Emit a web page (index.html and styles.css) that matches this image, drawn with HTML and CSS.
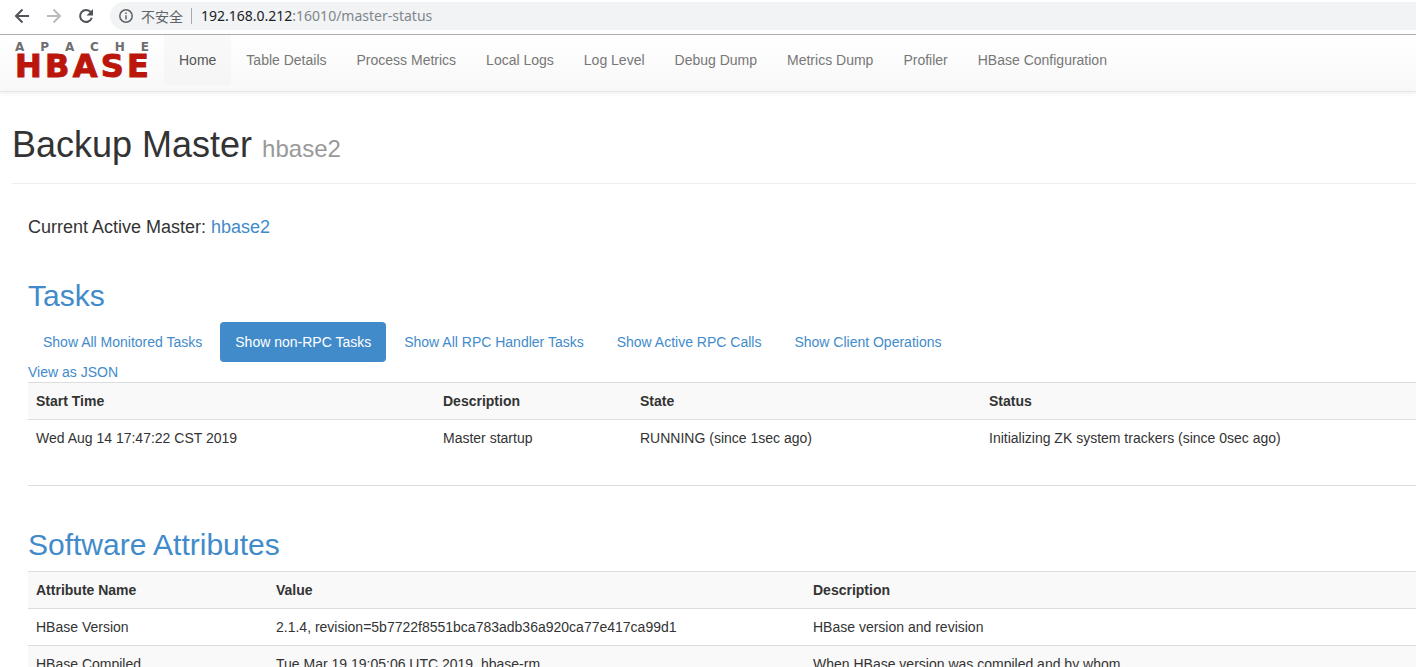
FILE: index.html
```html
<!DOCTYPE html>
<html lang="en">
<head>
<meta charset="utf-8">
<title>Backup Master: hbase2</title>
<link rel="stylesheet" href="styles.css">
</head>
<body>
<div class="toolbar">
  <button class="tool" type="button" aria-label="Back"><svg viewBox="0 0 16 16" width="16" height="16"><path d="M15 8H2.500M8.500 1.500L2 8l6.500 6.500"/></svg></button>
  <button class="tool tool-disabled" type="button" aria-label="Forward" disabled><svg viewBox="0 0 16 16" width="16" height="16"><path d="M1 8h12.500M7.500 1.500L14 8l-6.500 6.500"/></svg></button>
  <button class="tool" type="button" aria-label="Reload"><svg viewBox="0 0 16 16" width="16" height="16"><path d="M12.800 4.200A6 6 0 1 0 13.800 9.800"/><path class="solid" d="M15 1v6.500H8.500z"/></svg></button>
  <div class="address">
    <svg class="info" viewBox="0 0 14 14" width="14" height="14"><circle cx="7" cy="7" r="6.200"/><path d="M7 6.200v4.300M7 3.500v1.500"/></svg>
    <span class="insecure" lang="zh">不安全</span>
    <span class="url"><span class="host">192.168.0.212</span>:16010/master-status</span>
  </div>
</div>
<header class="navbar">
  <a class="brand" href="#" aria-label="Apache HBase">
    <span class="brand-top"><span>A</span><span>P</span><span>A</span><span>C</span><span>H</span><span>E</span></span>
    <span class="brand-main"><span>H</span><span>B</span><span>A</span><span>S</span><span>E</span></span>
  </a>
  <nav class="menu">
    <a class="active" href="#">Home</a>
    <a href="#">Table Details</a>
    <a href="#">Process Metrics</a>
    <a href="#">Local Logs</a>
    <a href="#">Log Level</a>
    <a href="#">Debug Dump</a>
    <a href="#">Metrics Dump</a>
    <a href="#">Profiler</a>
    <a href="#">HBase Configuration</a>
  </nav>
</header>
<main class="page">
  <div class="page-header"><h1>Backup Master <small>hbase2</small></h1></div>
  <div class="content">
    <p class="lead">Current Active Master: <a href="#">hbase2</a></p>
    <section class="tasks">
      <h2><a href="#">Tasks</a></h2>
      <nav class="pills">
        <a href="#">Show All Monitored Tasks</a>
        <a class="active" href="#">Show non-RPC Tasks</a>
        <a href="#">Show All RPC Handler Tasks</a>
        <a href="#">Show Active RPC Calls</a>
        <a href="#">Show Client Operations</a>
      </nav>
      <a class="json" href="#">View as JSON</a>
      <table>
        <colgroup><col class="c-time"><col class="c-desc"><col class="c-state"><col></colgroup>
        <tr><th>Start Time</th><th>Description</th><th>State</th><th>Status</th></tr>
        <tr><td>Wed Aug 14 17:47:22 CST 2019</td><td>Master startup</td><td>RUNNING (since 1sec ago)</td><td>Initializing ZK system trackers (since 0sec ago)</td></tr>
      </table>
    </section>
    <section>
      <h2><a href="#">Software Attributes</a></h2>
      <table>
        <colgroup><col class="c-name"><col class="c-value"><col></colgroup>
        <tr><th>Attribute Name</th><th>Value</th><th>Description</th></tr>
        <tr><td>HBase Version</td><td>2.1.4, revision=5b7722f8551bca783adb36a920ca77e417ca99d1</td><td>HBase version and revision</td></tr>
        <tr><td>HBase Compiled</td><td>Tue Mar 19 19:05:06 UTC 2019, hbase-rm</td><td>When HBase version was compiled and by whom</td></tr>
      </table>
    </section>
  </div>
</main>
</body>
</html>
```
FILE: styles.css
```css
* { box-sizing: border-box; }

body {
  display: flex;
  flex-direction: column;
  height: 100vh;
  margin: 0;
  overflow: hidden;
  background: #fff;
  color: #333;
  font: 14px/20px "Liberation Sans", Arial, sans-serif;
}

a { color: #428bca; text-decoration: none; }

/* Browser toolbar */
.toolbar {
  display: flex;
  flex: none;
  align-items: center;
  gap: 16px;
  padding: 2px 0 4px 14px;
  border-bottom: 1px solid #b0b0b0;
}
.tool {
  display: flex;
  padding: 0;
  border: 0;
  background: none;
  color: #505357;
}
.tool-disabled { color: #b9bbbd; }
.tool svg { fill: none; stroke: currentColor; stroke-width: 2; }
.tool .solid { fill: currentColor; stroke: none; }
.address {
  display: flex;
  flex: 1;
  align-items: center;
  height: 28px;
  padding-left: 9px;
  border-radius: 14px 0 0 14px;
  background: #f1f3f4;
  font-family: "Noto Sans", "Noto Sans CJK SC", sans-serif;
}
.info { fill: none; stroke: #5f6368; stroke-width: 1.5; }
.insecure {
  margin-left: 8px;
  padding-right: 8px;
  border-right: 1px solid #a5a8ac;
  color: #5f6368;
  font-family: "Noto Sans CJK SC", sans-serif;
  line-height: 16px;
}
.url { margin-left: 9px; color: #80868b; }
.host { color: #202124; }

/* Site navigation */
.navbar {
  display: flex;
  flex: none;
  height: 57px;
  border-bottom: 1px solid #e7e7e7;
  background: linear-gradient(#fff, #f8f8f8);
  box-shadow: 0 1px 5px rgba(0, 0, 0, 0.08);
}
.brand {
  display: flex;
  flex-direction: column;
  width: 164px;
  padding: 7px 15px 0;
  font-family: "DejaVu Sans", sans-serif;
  font-weight: bold;
}
.brand-top, .brand-main { display: flex; justify-content: space-between; }
.brand-top { color: #6d6e70; font-size: 12px; line-height: 11px; }
.brand-main {
  color: #ba160c;
  font-size: 32px;
  line-height: 26px;
  -webkit-text-stroke: 1px #ba160c;
}
.menu { display: flex; }
.menu a { height: 50px; padding: 15px; color: #777; white-space: nowrap; }
.menu .active { background: linear-gradient(#f9f9f9, #f5f5f5); color: #555; }

/* Page */
.page { flex: 1; min-height: 0; padding: 33px 0 0 12px; }
.page-header { padding-bottom: 14px; border-bottom: 1px solid #eee; }
h1, h2, p { margin: 0; font-weight: normal; }
h1 { font-size: 36px; line-height: 40px; }
h1 small { color: #999; font-size: 24px; }
.content { padding: 33px 0 0 16px; }
.lead { font-size: 18px; }
h2 { margin: 42px 0 10px; font-size: 30px; line-height: 33px; }
.tasks { padding-bottom: 29px; border-bottom: 1px solid #ddd; }
.pills { display: flex; gap: 3px; }
.pills a { padding: 10px 15px; border-radius: 4px; white-space: nowrap; }
.pills .active { background: #428bca; color: #fff; }
.json { display: block; }

table { width: 100%; border-collapse: separate; border-spacing: 0; table-layout: fixed; }
th, td { padding: 8px; border-top: 1px solid #ddd; text-align: left; white-space: nowrap; }
tr:nth-child(odd) { background: #f9f9f9; }
.c-time { width: 407px; }
.c-desc { width: 197px; }
.c-state { width: 349px; }
.c-name { width: 240px; }
.c-value { width: 537px; }
```
